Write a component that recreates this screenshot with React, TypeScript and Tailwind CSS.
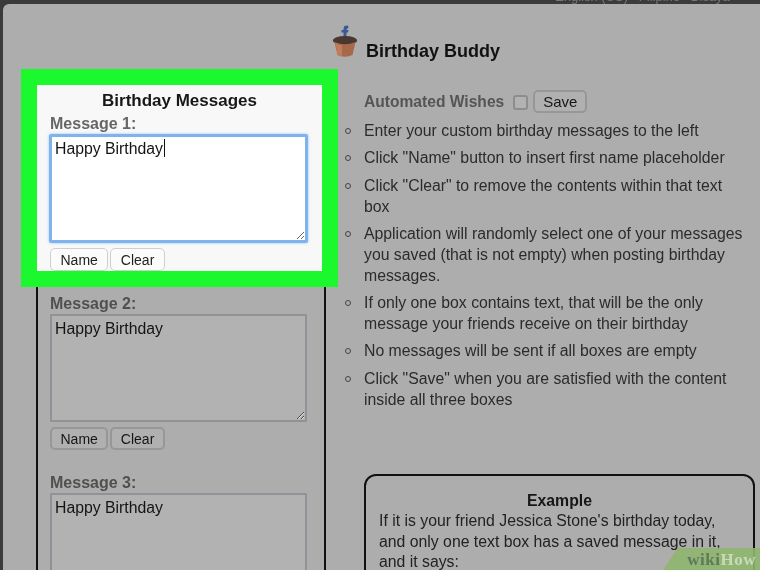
import React from "react";

const sans = { fontFamily: '"Liberation Sans", Arial, sans-serif' };

function Btn({ label, lit, wide }: { label: string; lit?: boolean; wide?: boolean }) {
  return (
    <button
      className={
        lit
          ? "h-[23px] px-[9.5px] rounded-[5px] border border-[#cfcfcf] bg-[#fbfbfb] text-[14px] leading-none text-[#222]"
          : wide
          ? "h-[23px] px-[8px] rounded-[5px] border-2 border-[#979797] bg-[#b0b0b0] text-[15px] leading-none text-[#161616]"
          : "h-[23px] px-[8.5px] rounded-[5px] border-2 border-[#979797] bg-[#b0b0b0] text-[14px] leading-none text-[#161616]"
      }
    >
      {label}
    </button>
  );
}

function Box({ label }: { label: string }) {
  return (
    <div>
      <div className="text-[16px] leading-[18px] font-bold text-[#505050]">{label}</div>
      <textarea
        readOnly
        defaultValue="Happy Birthday"
        className="block mt-[1px] h-[108px] w-[257px] rounded-[1px] border-2 border-[#8f9397] bg-[#b2b2b2] pl-[3px] pt-[3px] text-[15.8px] leading-[20px] text-[#141414] outline-none"
      />
    </div>
  );
}

const items = [
  "Enter your custom birthday messages to the left",
  'Click "Name" button to insert first name placeholder',
  'Click "Clear" to remove the contents within that text box',
  "Application will randomly select one of your messages you saved (that is not empty) when posting birthday messages.",
  "If only one box contains text, that will be the only message your friends receive on their birthday",
  "No messages will be sent if all boxes are empty",
  'Click "Save" when you are satisfied with the content inside all three boxes',
];

export default function App() {
  return (
    <div style={sans} className="relative w-[760px] h-[570px] overflow-hidden bg-[#3b3b3b] flex flex-col blur-[0.4px]">
      <div className="h-[4px] shrink-0 overflow-hidden bg-[#3b3b3b] pl-[555px] text-[13px] leading-[4px] text-[#777]">
        <span className="relative top-[-5px]">English (US) &nbsp; Filipino &nbsp; Bisaya</span>
      </div>
      <div className="flex-1 ml-[3px] rounded-tl-[6px] bg-[#adadad] overflow-hidden flex flex-col">
        <header className="h-[65px] shrink-0 flex items-start pl-[328px] pt-[20px] gap-[7px]">
          <svg width="28" height="36" viewBox="0 0 28 36" className="mt-[1px] shrink-0">
            <path d="M13 1.5 Q15.5 0 17.5 1 L17 3.5 Q15.5 3.2 15.5 5 L17.5 5 L17 7.5 L15.5 7.5 L15.5 14 L12.5 14 L12.5 7.5 L10.5 7.5 L10.5 5 L12.5 5 Q12.5 3 13 1.5 Z" fill="#3a5a96" />
            <ellipse cx="14" cy="15.5" rx="12" ry="4.5" fill="#4a3732" />
            <path d="M3.5 17 Q14 21.5 24.5 17 L21.5 30 Q14 33.5 6.5 30 Z" fill="#a8694a" />
            <path d="M4.5 18 Q8 20 11 20.3 L11 31.5 Q8 31 6.5 30 Z" fill="#bd7c5a" />
          </svg>
          <h1 className="mt-[17px] text-[18px] leading-[20px] font-bold text-[#111]">Birthday Buddy</h1>
        </header>
        <div className="flex flex-1 min-h-0">
          <section className="ml-[18px] w-[317px] shrink-0 flex flex-col">
            <div className="h-[218px] shrink-0 border-[16px] border-[#1bf92e] bg-[#f8f8f8]">
              <h2 className="text-center text-[17px] leading-[20px] pt-[6px] font-bold text-[#181818]">Birthday Messages</h2>
              <div className="pl-[12px]">
                <div className="text-[16px] leading-[18px] mt-[4px] ml-px font-bold text-[#666]">Message 1:</div>
                <div className="relative w-[259px] mt-[1px]">
                  <textarea
                    readOnly
                    defaultValue="Happy Birthday"
                    className="block w-full h-[109px] rounded-[2px] border-[3px] border-[#7fb3ec] bg-white pl-[3px] pt-[2px] text-[15.8px] leading-[20px] text-[#141414] outline-none shadow-[0_0_3px_#9cc6f2]"
                  />
                  <span className="absolute left-[115px] top-[5px] h-[18px] w-[1px] bg-[#111]" />
                </div>
                <div className="mt-[5px] ml-px flex gap-[2px]">
                  <Btn lit label="Name" />
                  <Btn lit label="Clear" />
                </div>
              </div>
            </div>
            <div className="ml-[15px] w-[290px] flex-1 border-x-2 border-[#111] pl-[12px] pt-[8px]">
              <Box label="Message 2:" />
              <div className="mt-[5px] flex gap-[2px]">
                <Btn label="Name" />
                <Btn label="Clear" />
              </div>
              <div className="mt-[24px]">
                <Box label="Message 3:" />
              </div>
            </div>
          </section>
          <section className="ml-[26px] flex-1 min-w-0 pr-[2px]">
            <div className="flex items-center mt-[21px]">
              <span className="text-[15.6px] font-bold leading-[20px] text-[#555]">Automated Wishes</span>
              <span className="ml-[9px] h-[15px] w-[15px] rounded-[3px] border-2 border-[#8d8d8d] bg-[#b2b2b2]" />
              <span className="ml-[5px]">
                <Btn wide label="Save" />
              </span>
            </div>
            <ul className="mt-[6px] -ml-[19px] w-[404px] text-[15.8px] leading-[21px] text-[#2b2b2b] flex flex-col gap-[6.3px]">
              {items.map((t) => (
                <li key={t} className="flex">
                  <span className="mt-[8px] mr-[13px] h-[6px] w-[6px] shrink-0 rounded-full border border-[#444]" />
                  <span>{t}</span>
                </li>
              ))}
            </ul>
            <div className="mt-[64px] w-[391px] h-[120px] rounded-[12px] border-2 border-[#111] px-[13px] pt-[15px] text-[15.8px] leading-[20.5px] text-[#222]">
              <div className="text-center font-bold text-[#161616]">Example</div>
              <p>
                If it is your friend Jessica Stone's birthday today,
                <br />
                and only one text box has a saved message in it,
                <br />
                and it says:
              </p>
            </div>
          </section>
        </div>
      </div>
      <div className="absolute right-0 bottom-0 w-[97px] h-[22px] bg-[#8fb66f]/90 [clip-path:polygon(15%_0,100%_0,100%_100%,0_100%)] flex items-center justify-end pr-[4px]">
        <span style={{ fontFamily: '"Liberation Serif", serif' }} className="text-[17px] font-bold tracking-[0.5px] leading-none">
          <span className="text-[#5d7a5a]">wiki</span>
          <span className="text-[#c8dab8]">How</span>
        </span>
      </div>
    </div>
  );
}
